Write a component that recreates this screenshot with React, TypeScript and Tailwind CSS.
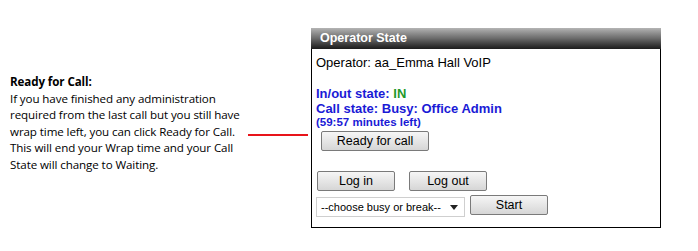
export default function App() {
  const btn =
    "h-[20px] rounded-[2px] border border-[#7a7a7a] bg-gradient-to-b from-[#f6f6f6] to-[#d6d6d6] text-[12.5px] leading-none text-black";

  return (
    <div className="flex h-[251px] w-[698px] bg-white font-['Liberation_Sans',Arial,sans-serif]">
      {/* help text */}
      <div className="w-[248px] shrink-0 pl-[10px] pt-[74px] font-['Open_Sans',sans-serif] text-[11.6px] leading-[16.5px] tracking-[-0.1px] text-black">
        <div className="font-bold">Ready for Call:</div>
        <p>
          If you have finished any administration
          <br />
          required from the last call but you still have
          <br />
          wrap time left, you can click Ready for Call.
          <br />
          This will end your Wrap time and your Call
          <br />
          State will change to Waiting.
        </p>
      </div>

      {/* pointer */}
      <div className="mt-[134px] h-[2px] w-[60px] shrink-0 bg-[#e8141a]" />

      {/* operator panel */}
      <div className="ml-[3px] mt-[28px] flex h-[200px] w-[350px] shrink-0 flex-col border-x border-b border-black">
        <div className="-mx-px h-[21px] bg-gradient-to-b from-[#b4b4b4] via-[#6a6a6a] to-[#1c1c1c] pl-[9px] text-[12.5px] font-bold leading-[21px] text-white">
          Operator State
        </div>
        <div className="flex flex-1 flex-col px-[4px] pt-[6px]">
          <div className="text-[13px] leading-[16px] text-black">Operator: aa_Emma Hall VoIP</div>
          <div className="mt-[15px] text-[13px] font-bold leading-[16px] text-[#1a1ad6]">
            In/out state: <span className="text-[#1f9a2a]">IN</span>
          </div>
          <div className="-mt-px text-[13px] font-bold leading-[16px] text-[#1a1ad6]">Call state: Busy: Office Admin</div>
          <div className="-mt-px text-[11.5px] font-bold leading-[13px] text-[#1a1ad6]">(59:57 minutes left)</div>
          <button className={`${btn} ml-[5px] mt-[2px] w-[108px]`}>Ready for call</button>
          <div className="ml-[1px] mt-[20px] flex gap-[14px]">
            <button className={`${btn} w-[78px]`}>Log in</button>
            <button className={`${btn} w-[78px]`}>Log out</button>
          </div>
          <div className="mt-[4px] flex items-start gap-[5px]">
            <div className="mt-[2px] flex h-[20px] w-[149px] items-center justify-between whitespace-nowrap border border-[#cfcfcf] bg-white pl-[4px] pr-[6px] text-[11px] text-black">
              <span>--choose busy or break--</span>
              <svg width="8" height="5" viewBox="0 0 8 5">
                <path d="M0 0h8L4 5z" fill="#222" />
              </svg>
            </div>
            <button className={`${btn} w-[78px]`}>Start</button>
          </div>
        </div>
      </div>
    </div>
  );
}
